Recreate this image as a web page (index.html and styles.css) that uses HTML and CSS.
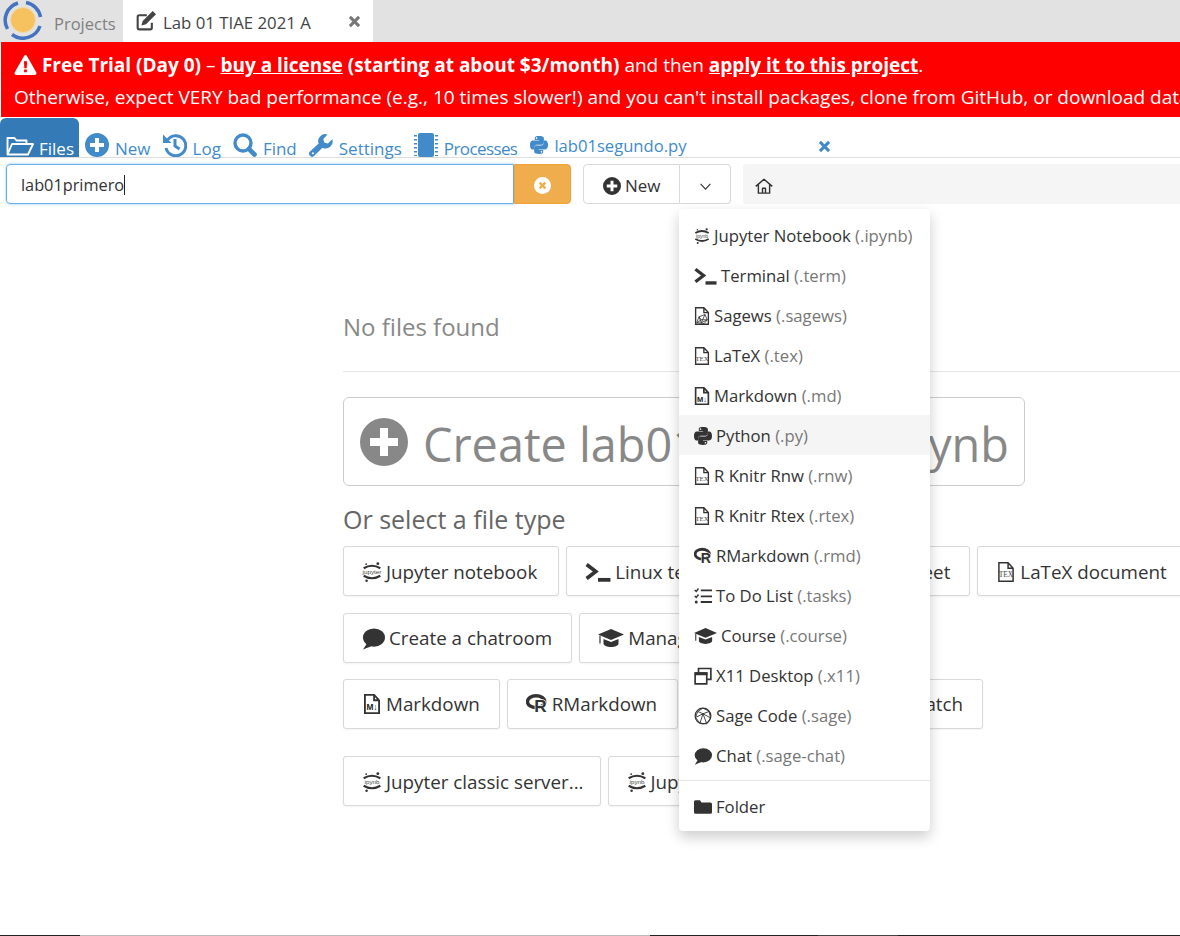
FILE: index.html
```html
<!DOCTYPE html>
<html lang="en">
<head>
  <meta charset="UTF-8" />
  <title>Lab 01 TIAE 2021 A</title>
  <link rel="stylesheet" href="styles.css">
</head>
<body>
  <svg class="sprite" xmlns="http://www.w3.org/2000/svg">
    <symbol id="plus-circle" viewBox="0 0 24 24"><path fill="currentColor" fill-rule="evenodd" d="M12 0a12 12 0 1 0 0 24a12 12 0 0 0 0-24zM10 5h4v5h5v4h-5v5h-4v-5H5v-4h5z"/></symbol>
    <symbol id="history" viewBox="0 0 24 24"><path fill="none" stroke="currentColor" stroke-width="3" d="M4.500 7A10 10 0 1 1 3 15M12 6v7l4.500 3"/><path fill="currentColor" d="M0 1.500l8.500 8.500H0z"/></symbol>
    <symbol id="search" viewBox="0 0 24 24"><circle cx="10" cy="10" r="8" fill="none" stroke="currentColor" stroke-width="3.400"/><path stroke="currentColor" stroke-width="4.600" stroke-linecap="round" d="M16 16l5.500 5.500"/></symbol>
    <symbol id="wrench" viewBox="0 0 24 24"><path fill="currentColor" fill-rule="evenodd" d="M23.300 6.300l-4.400 4.100-3.700-.9-.9-3.600 4.300-4.300a7 7 0 0 0-9 8.800L1 18.500a3 3 0 0 0 4.300 4.300l8.100-8.100a7 7 0 0 0 9.900-8.400zM3.200 19.600a1 1 0 1 1 0 1.400 1 1 0 0 1 0-1.400z"/></symbol>
    <symbol id="chip" viewBox="0 0 24 24"><rect x="4" y="0" width="16" height="24" rx="2" fill="currentColor"/><path stroke="currentColor" stroke-width="3" stroke-dasharray="1.600 2.400" d="M1.500 2v21M22.500 2v21"/></symbol>
    <symbol id="python" viewBox="0 0 24 24"><path fill="currentColor" fill-rule="evenodd" d="M11.900 0C6 0 6.400 2.600 6.400 2.600v2.700h5.700v.8H4.100S0 5.600 0 11.900s3.600 6.100 3.600 6.100h2.100v-2.900s-.1-3.600 3.500-3.600h5.900s3.400.1 3.400-3.300V2.900S19.100 0 11.900 0zM8.700 1.800a1 1 0 1 1 0 2.100 1 1 0 0 1 0-2.100z"/><path fill="currentColor" fill-rule="evenodd" d="M12.100 24c5.900 0 5.500-2.600 5.500-2.600v-2.700h-5.700v-.8h8s4.100.5 4.100-5.800-3.600-6.100-3.600-6.100h-2.100v2.900s.1 3.600-3.500 3.600H8.900s-3.400-.1-3.400 3.300v5.300S4.900 24 12.100 24zm3.200-1.800a1 1 0 1 1 0-2.100 1 1 0 0 1 0 2.100z"/></symbol>
    <symbol id="terminal" viewBox="0 0 24 18"><path fill="none" stroke="currentColor" stroke-width="3.400" d="M1.500 2l8.500 6.500-8.500 6.500"/><path fill="currentColor" d="M12 14.500h11.500V18H12z"/></symbol>
    <symbol id="jupyter" viewBox="0 0 24 24"><path fill="none" stroke="currentColor" stroke-width="2.600" d="M2 7.500Q12 1.500 22 7.500M2 16.500Q12 22.500 22 16.500"/><circle cx="19" cy="2" r="1.700" fill="currentColor"/><circle cx="5" cy="2.500" r="1.100" fill="currentColor"/><circle cx="5.500" cy="22.500" r="1.500" fill="currentColor"/><text class="tiny-label" x="12" y="14.500" text-anchor="middle">ipynb</text></symbol>
    <symbol id="jupyter-color" viewBox="0 0 24 24"><path fill="none" stroke="currentColor" stroke-width="2.600" d="M2 7.500Q12 1.500 22 7.500M2 16.500Q12 22.500 22 16.500"/><circle cx="19" cy="2" r="1.700" fill="currentColor"/><circle cx="5" cy="2.500" r="1.100" fill="currentColor"/><circle cx="5.500" cy="22.500" r="1.500" fill="currentColor"/><text class="tiny-label" x="12" y="14.500" text-anchor="middle">jupyter</text></symbol>
    <symbol id="file-tex" viewBox="0 0 20 24"><path fill="#fff" stroke="currentColor" stroke-width="1.800" d="M1.500 1h11l6 6.500V23h-17zM12.500 1v6.500h6"/><text class="tiny-label tex" x="10" y="18.500" text-anchor="middle">TEX</text></symbol>
    <symbol id="file-sage" viewBox="0 0 20 24"><path fill="#fff" stroke="currentColor" stroke-width="1.800" d="M1.500 1h11l6 6.500V23h-17zM12.500 1v6.500h6"/><path fill="none" stroke="currentColor" stroke-width="1.100" d="M3 21l3-8 8-3 3 7-4 5-9-1zM6 13l3 8 8-4M9 21l5-11M3 21l6-4 8 0M6 13l3 4"/></symbol>
    <symbol id="file-md" viewBox="0 0 20 24"><path fill="#fff" stroke="currentColor" stroke-width="2.200" d="M1.500 1h11l6 6.500V23h-17zM12.500 1v6.500h6"/><text class="tiny-label md" x="10" y="19.500" text-anchor="middle">M↓</text></symbol>
    <symbol id="rlang" viewBox="0 0 24 22"><ellipse cx="11" cy="8.500" rx="9.500" ry="6.500" fill="none" stroke="currentColor" stroke-width="3.800"/><text class="r-mark" x="9" y="20">R</text></symbol>
    <symbol id="tasks" viewBox="0 0 24 24"><path fill="none" stroke="currentColor" stroke-width="1.900" d="M1 4l2 2 3-4M1 12l2 2 3-4"/><circle cx="3" cy="20" r="2" fill="currentColor"/><path stroke="currentColor" stroke-width="2.600" d="M9 4.500h15M9 12.500h15M9 20h15"/></symbol>
    <symbol id="cap" viewBox="0 0 26 20"><path fill="currentColor" d="M13 1L0 6.500 13 12l13-5.500zM5.500 11v4.500c0 2 3.500 3.500 7.500 3.500s7.500-1.500 7.500-3.500V11L13 14z"/><path stroke="currentColor" stroke-width="1.200" d="M2 7.500v8"/></symbol>
    <symbol id="windows" viewBox="0 0 24 24"><path fill="none" stroke="currentColor" stroke-width="2.200" d="M1.500 8h15.500v14.500H1.500zM6 7V2h16.500v14.500H18"/><path fill="currentColor" d="M1 7h17v4H1z"/></symbol>
    <symbol id="sage" viewBox="0 0 24 24"><circle cx="12" cy="12" r="10.500" fill="none" stroke="currentColor" stroke-width="1.600"/><path fill="none" stroke="currentColor" stroke-width="1.200" d="M12 1.500L5 6l-3 8 6 7.500 9 1 5-8-2-9zM5 6l7 3 8-3M12 9l-4 12.500M12 9l5 13.500M12 9l10 5.500M2 14l10-5"/></symbol>
    <symbol id="chat" viewBox="0 0 24 24"><ellipse cx="12.500" cy="11" rx="11.500" ry="9.500" fill="currentColor"/><path fill="currentColor" d="M6 16L1 23.500l10-4z"/></symbol>
    <symbol id="folder" viewBox="0 0 24 20"><path fill="currentColor" d="M0 3a2 2 0 0 1 2-2h6l2 3h12a2 2 0 0 1 2 2v11a2 2 0 0 1-2 2H2a2 2 0 0 1-2-2z"/></symbol>
    <symbol id="folder-open" viewBox="0 0 28 20"><path fill="none" stroke="currentColor" stroke-width="1.900" stroke-linejoin="round" d="M1.500 18.500V2h7l2 2.500h10V8M1.500 18.500L6 8h21l-5 10.500z"/></symbol>
    <symbol id="warning" viewBox="0 0 24 22"><path fill="currentColor" fill-rule="evenodd" d="M12 0a1.800 1.800 0 0 1 1.600 1L23.800 19a2 2 0 0 1-1.700 3H1.900a2 2 0 0 1-1.700-3L10.400 1A1.800 1.800 0 0 1 12 0zM10.300 7l.4 7.500h2.600l.4-7.500zM10.500 16v3h3v-3z"/></symbol>
    <symbol id="edit" viewBox="0 0 24 24"><path fill="none" stroke="currentColor" stroke-width="2.500" d="M19 14v6a2 2 0 0 1-2 2H4a2 2 0 0 1-2-2V7a2 2 0 0 1 2-2h9"/><path fill="currentColor" d="M20 0l4 4-12 12-5.500 1.500L8 12z"/></symbol>
    <symbol id="times" viewBox="0 0 24 24"><path stroke="currentColor" stroke-width="5.500" d="M3.500 3.500l17 17M20.500 3.500l-17 17"/></symbol>
    <symbol id="times-circle" viewBox="0 0 24 24"><circle cx="12" cy="12" r="12" fill="#fff"/><path stroke="currentColor" stroke-width="3.400" d="M8 8l8 8M16 8l-8 8"/></symbol>
    <symbol id="home" viewBox="0 0 24 24"><path fill="none" stroke="currentColor" stroke-width="1.900" stroke-linejoin="round" d="M1 12.500L12 3l11 9.500M4.500 10v11.500h15V10M10 21.500V15h4v6.500"/></symbol>
    <symbol id="chevron" viewBox="0 0 24 24"><path fill="none" stroke="currentColor" stroke-width="2" d="M3 7l9 10 9-10"/></symbol>
  </svg>

  <header class="top-bar">
    <div class="projects-tab">
      <svg class="logo" viewBox="0 0 40 40">
        <circle cx="20" cy="20" r="12.500" fill="#f6c15f" stroke="#f2d9a8"/>
        <path fill="none" stroke="#4474c0" stroke-width="3.500" d="M23 2.500A18 18 0 0 1 37.500 17M37 26A18 18 0 0 1 9 34.500M4.500 29A18 18 0 0 1 15 3"/>
      </svg>
      <span>Projects</span>
    </div>
    <div class="file-tab">
      <svg class="icon edit-icon"><use href="#edit"/></svg>
      <span class="file-tab-name">Lab 01 TIAE 2021 A</span>
      <svg class="icon close-icon"><use href="#times"/></svg>
    </div>
  </header>

  <div class="trial-banner">
    <p class="banner-line"><svg class="icon warn-icon"><use href="#warning"/></svg> <b>Free Trial (Day 0)</b> – <b><u>buy a license</u> (starting at about $3/month)</b> and then <b><u>apply it to this project</u></b>.</p>
    <p class="banner-line">Otherwise, expect VERY bad performance (e.g., 10 times slower!) and you can't install packages, clone from GitHub, or download datasets from the internet.</p>
  </div>

  <nav class="file-nav">
    <a class="nav-tab active"><svg class="icon nav-folder"><use href="#folder-open"/></svg> Files</a>
    <a class="nav-tab"><svg class="icon nav-icon"><use href="#plus-circle"/></svg> New</a>
    <a class="nav-tab"><svg class="icon nav-icon"><use href="#history"/></svg> Log</a>
    <a class="nav-tab"><svg class="icon nav-icon"><use href="#search"/></svg> Find</a>
    <a class="nav-tab"><svg class="icon nav-icon"><use href="#wrench"/></svg> Settings</a>
    <a class="nav-tab processes"><svg class="icon nav-icon"><use href="#chip"/></svg> Processes</a>
    <a class="nav-file"><svg class="icon py-icon"><use href="#python"/></svg> lab01segundo.py</a>
    <svg class="icon nav-close"><use href="#times"/></svg>
  </nav>

  <div class="toolbar">
    <div class="search-box">lab01primero<span class="caret"></span></div>
    <button class="search-clear"><svg class="icon clear-icon"><use href="#times-circle"/></svg></button>
    <div class="new-group">
      <button class="new-main"><svg class="icon new-icon"><use href="#plus-circle"/></svg> New</button>
      <button class="new-arrow"><svg class="icon arrow-icon"><use href="#chevron"/></svg></button>

      <ul class="new-menu">
        <li><svg class="icon m-16"><use href="#jupyter"/></svg>Jupyter Notebook <em>(.ipynb)</em></li>
        <li><svg class="icon m-23"><use href="#terminal"/></svg>Terminal <em>(.term)</em></li>
        <li><svg class="icon m-16"><use href="#file-sage"/></svg>Sagews <em>(.sagews)</em></li>
        <li><svg class="icon m-16"><use href="#file-tex"/></svg>LaTeX <em>(.tex)</em></li>
        <li><svg class="icon m-16"><use href="#file-md"/></svg>Markdown <em>(.md)</em></li>
        <li class="hover"><svg class="icon m-18"><use href="#python"/></svg>Python <em>(.py)</em></li>
        <li><svg class="icon m-16"><use href="#file-tex"/></svg>R Knitr Rnw <em>(.rnw)</em></li>
        <li><svg class="icon m-16"><use href="#file-tex"/></svg>R Knitr Rtex <em>(.rtex)</em></li>
        <li><svg class="icon m-18"><use href="#rlang"/></svg>RMarkdown <em>(.rmd)</em></li>
        <li><svg class="icon m-18"><use href="#tasks"/></svg>To Do List <em>(.tasks)</em></li>
        <li><svg class="icon m-23"><use href="#cap"/></svg>Course <em>(.course)</em></li>
        <li><svg class="icon m-18"><use href="#windows"/></svg>X11 Desktop <em>(.x11)</em></li>
        <li><svg class="icon m-18"><use href="#sage"/></svg>Sage Code <em>(.sage)</em></li>
        <li><svg class="icon m-18"><use href="#chat"/></svg>Chat <em>(.sage-chat)</em></li>
        <li class="divider"></li>
        <li><svg class="icon m-18"><use href="#folder"/></svg>Folder</li>
      </ul>
    </div>
    <div class="breadcrumb"><svg class="icon home-icon"><use href="#home"/></svg></div>
  </div>

  <main class="content">
    <h3 class="no-files">No files found</h3>
    <hr class="rule" />
    <button class="create-btn"><svg class="icon create-icon"><use href="#plus-circle"/></svg><span class="create-label">Create lab01primero.ipynb</span></button>
    <h4 class="select-title">Or select a file type</h4>

    <div class="type-row row-1">
      <button class="type-btn jupyter-btn"><svg class="icon b-20"><use href="#jupyter-color"/></svg>Jupyter notebook</button>
      <button class="type-btn"><svg class="icon b-26"><use href="#terminal"/></svg>Linux terminal</button>
      <button class="type-btn sheet-btn"><svg class="icon b-20"><use href="#file-sage"/></svg>Sage worksheet</button>
      <button class="type-btn"><svg class="icon b-20"><use href="#file-tex"/></svg>LaTeX document</button>
    </div>
    <div class="type-row row-2">
      <button class="type-btn"><svg class="icon b-23"><use href="#chat"/></svg>Create a chatroom</button>
      <button class="type-btn"><svg class="icon b-26"><use href="#cap"/></svg>Manage a course</button>
    </div>
    <div class="type-row row-3">
      <button class="type-btn"><svg class="icon b-20"><use href="#file-md"/></svg>Markdown</button>
      <button class="type-btn rmd-btn"><svg class="icon b-22"><use href="#rlang"/></svg>RMarkdown</button>
      <button class="type-btn stopwatch-btn"><svg class="icon b-20"><use href="#tasks"/></svg>Stopwatch</button>
    </div>
    <div class="type-row row-4">
      <button class="type-btn classic-btn"><svg class="icon b-20"><use href="#jupyter"/></svg>Jupyter classic server...</button>
      <button class="type-btn"><svg class="icon b-20"><use href="#jupyter"/></svg>JupyterLab server</button>
    </div>
  </main>

  <div class="window-edge">
    <span class="edge-dark seg-80"></span>
    <span class="edge-light seg-570"></span>
    <span class="edge-dark seg-168"></span>
    <span class="edge-mid seg-80"></span>
    <span class="edge-dark seg-rest"></span>
  </div>
</body>
</html>
```

FILE: styles.css
```css
html, body {
  margin: 0;
  height: 936px;
}
body {
  width: 1180px;
  overflow: hidden;
  display: flex;
  flex-direction: column;
  font-family: "Open Sans", "Noto Sans", sans-serif;
  font-size: 17px;
  color: #333;
  background: #fff;
}
.sprite {
  display: none;
}
.icon {
  flex: none;
  vertical-align: -3px;
}
button {
  font: inherit;
  color: inherit;
  background: #fff;
  cursor: pointer;
}

/* top tabs */
.top-bar {
  display: flex;
  flex: none;
  height: 42px;
  background: #e2e2e2;
}
.projects-tab {
  display: flex;
  align-items: center;
  width: 123px;
  padding-left: 3px;
  box-sizing: border-box;
  color: #808080;
  font-size: 16.500px;
}
.logo {
  width: 40px;
  height: 40px;
  margin: -2px 11px 0 0;
}
.projects-tab span {
  margin-top: 4px;
}
.file-tab {
  display: flex;
  align-items: center;
  width: 250px;
  padding-left: 13px;
  box-sizing: border-box;
  background: #fff;
  color: #444;
  font-size: 16.800px;
}
.file-tab-name {
  margin: 2px 0 0 7px;
}
.edit-icon {
  width: 20px;
  height: 20px;
}
.close-icon {
  width: 13px;
  height: 13px;
  margin-left: auto;
  margin-right: 12px;
  color: #777;
}

/* red trial banner */
.trial-banner {
  flex: none;
  height: 75px;
  margin-left: 1px;
  padding: 11px 0 0 13px;
  box-sizing: border-box;
  background: #f00;
  color: #fff;
  font-size: 19px;
  white-space: nowrap;
  overflow: hidden;
}
.banner-line {
  margin: 0 0 7px;
  line-height: 25px;
}
.warn-icon {
  width: 23px;
  height: 20px;
}

/* files nav */
.file-nav {
  display: flex;
  flex: none;
  align-items: flex-end;
  height: 39px;
  margin-top: 1px;
  border-bottom: 1px solid #ddd;
  color: #428bca;
}
.nav-tab {
  display: flex;
  align-items: flex-end;
  gap: 6px;
  padding: 0 6px;
  white-space: nowrap;
  line-height: 16px;
}
.nav-tab.active {
  width: 79px;
  height: 39px;
  padding: 0 0 0 6px;
  box-sizing: border-box;
  background: #337ab7;
  color: #fff;
  border-radius: 6px 6px 0 0;
  gap: 5px;
}
.nav-tab.processes {
  letter-spacing: -0.6px;
}
.nav-folder {
  width: 28px;
  height: 20px;
  margin-bottom: 1px;
}
.nav-icon {
  width: 24px;
  height: 24px;
}
.nav-file {
  display: flex;
  align-items: flex-end;
  gap: 6px;
  margin-left: 7px;
  font-size: 16.600px;
  line-height: 22px;
}
.py-icon {
  width: 18px;
  height: 18px;
  margin-bottom: 3px;
}
.nav-close {
  width: 13px;
  height: 13px;
  margin: 0 0 4px 132px;
}

/* toolbar */
.toolbar {
  display: flex;
  flex: none;
  height: 40px;
  margin-top: 6px;
  padding-left: 6px;
}
.search-box {
  display: flex;
  align-items: center;
  width: 508px;
  padding: 2px 0 0 14px;
  box-sizing: border-box;
  border: 1px solid #66afe9;
  border-radius: 4px 0 0 4px;
  box-shadow: 0 0 3px rgba(102, 175, 233, 0.7);
  font-size: 16.300px;
}
.caret {
  width: 1px;
  height: 20px;
  background: #222;
}
.search-clear {
  width: 57px;
  padding: 0;
  border: 1px solid #eea236;
  border-radius: 0 4px 4px 0;
  background: #f0ad4e;
  color: #f0ad4e;
}
.clear-icon {
  width: 17px;
  height: 17px;
}
.new-group {
  position: relative;
  display: flex;
  margin-left: 12px;
}
.new-main {
  width: 97px;
  padding: 2px 0 0;
  border: 1px solid #d9d9d9;
  border-radius: 4px 0 0 4px;
}
.new-icon {
  width: 18px;
  height: 18px;
}
.new-arrow {
  width: 51px;
  padding: 2px 0 0;
  border: 1px solid #d9d9d9;
  border-left: 0;
  border-radius: 0 4px 4px 0;
}
.arrow-icon {
  width: 13px;
  height: 13px;
  vertical-align: -1px;
}
.breadcrumb {
  display: flex;
  align-items: center;
  flex: 1;
  margin-left: 12px;
  padding: 3px 0 0 12px;
  background: #f5f5f5;
  border-radius: 4px 0 0 4px;
}
.home-icon {
  width: 18px;
  height: 18px;
}

/* new menu */
.new-menu {
  position: absolute;
  top: 45px;
  left: 96px;
  z-index: 5;
  width: 251px;
  margin: 0;
  padding: 6px 0 5px;
  box-sizing: border-box;
  list-style: none;
  background: #fff;
  border-radius: 4px;
  box-shadow: 0 6px 14px rgba(0, 0, 0, 0.2);
  font-size: 16.700px;
}
.new-menu li {
  display: block;
  height: 40px;
  padding-left: 15px;
  line-height: 42px;
  white-space: nowrap;
}
.new-menu li.hover {
  background: #f5f5f5;
}
.new-menu li.divider {
  height: 1px;
  margin: 5px 0;
  padding: 0;
  background: #e5e5e5;
}
.new-menu em {
  font-style: normal;
  color: #777;
}
.new-menu .icon {
  height: 18px;
  margin-right: 4px;
}
.m-16 {
  width: 16px;
}
.m-18 {
  width: 18px;
}
.m-23 {
  width: 23px;
}

/* main content */
.content {
  flex: 1;
  padding-left: 343px;
  min-height: 0;
}
.no-files {
  margin: 106px 0 0;
  font-size: 24px;
  font-weight: 400;
  line-height: 34px;
  color: #888;
}
.rule {
  margin: 27px 0 25px;
  border: 0;
  border-top: 1px solid #e5e5e5;
}
.create-btn {
  display: flex;
  align-items: center;
  width: 682px;
  height: 89px;
  padding: 0 0 0 16px;
  box-sizing: border-box;
  border: 1px solid #ccc;
  border-radius: 6px;
  font-size: 46.800px;
  color: #888;
  white-space: nowrap;
}
.create-icon {
  width: 48px;
  height: 48px;
  margin-right: 15px;
}
.create-label {
  margin-top: 4px;
}
.select-title {
  margin: 17px 0 0;
  font-size: 25px;
  font-weight: 400;
  line-height: 32px;
  color: #666;
}
.type-row {
  display: flex;
  gap: 7px;
  font-size: 18.800px;
  white-space: nowrap;
}
.row-1 {
  margin-top: 11px;
}
.row-2 {
  margin-top: 17px;
}
.row-3 {
  margin-top: 16px;
}
.row-4 {
  margin-top: 27px;
}
.type-btn {
  flex: none;
  height: 50px;
  padding: 0 19px 0 18px;
  border: 1px solid #d9d9d9;
  border-radius: 3px;
  box-shadow: 0 1px 2px rgba(0, 0, 0, 0.05);
}
.row-1 .type-btn, .row-4 .type-btn {
  padding-top: 2px;
}
.type-btn .icon {
  height: 20px;
  margin-right: 4px;
}
.type-btn .b-23 {
  height: 23px;
  vertical-align: -5px;
}
.jupyter-btn {
  padding-right: 21px;
}
.sheet-btn {
  padding-left: 19px;
}
.rmd-btn {
  padding-right: 20px;
}
.stopwatch-btn {
  margin-left: 143px;
}
.classic-btn {
  padding-right: 16px;
}
.b-20 {
  width: 20px;
}
.b-22 {
  width: 22px;
}
.b-23 {
  width: 23px;
}
.b-26 {
  width: 26px;
  margin-right: 5px;
}
.tiny-label {
  font-family: "Liberation Sans", sans-serif;
  font-size: 7.500px;
  fill: #444;
}
.tiny-label.tex {
  font-family: "Liberation Serif", serif;
  font-size: 9px;
}
.tiny-label.md {
  font-size: 10px;
  font-weight: 700;
  fill: #222;
}
.r-mark {
  font-family: "Liberation Sans", sans-serif;
  font-size: 19px;
  font-weight: 700;
  fill: currentColor;
  stroke: #fff;
  stroke-width: 1.500px;
  paint-order: stroke;
}

/* bottom edge of the window */
.window-edge {
  display: flex;
  flex: none;
  height: 1px;
}
.edge-dark {
  background: #222;
}
.edge-light {
  background: #bbb;
}
.edge-mid {
  background: #444;
}
.seg-80 {
  width: 80px;
}
.seg-570 {
  width: 570px;
}
.seg-168 {
  width: 168px;
}
.seg-rest {
  flex: 1;
}
```
